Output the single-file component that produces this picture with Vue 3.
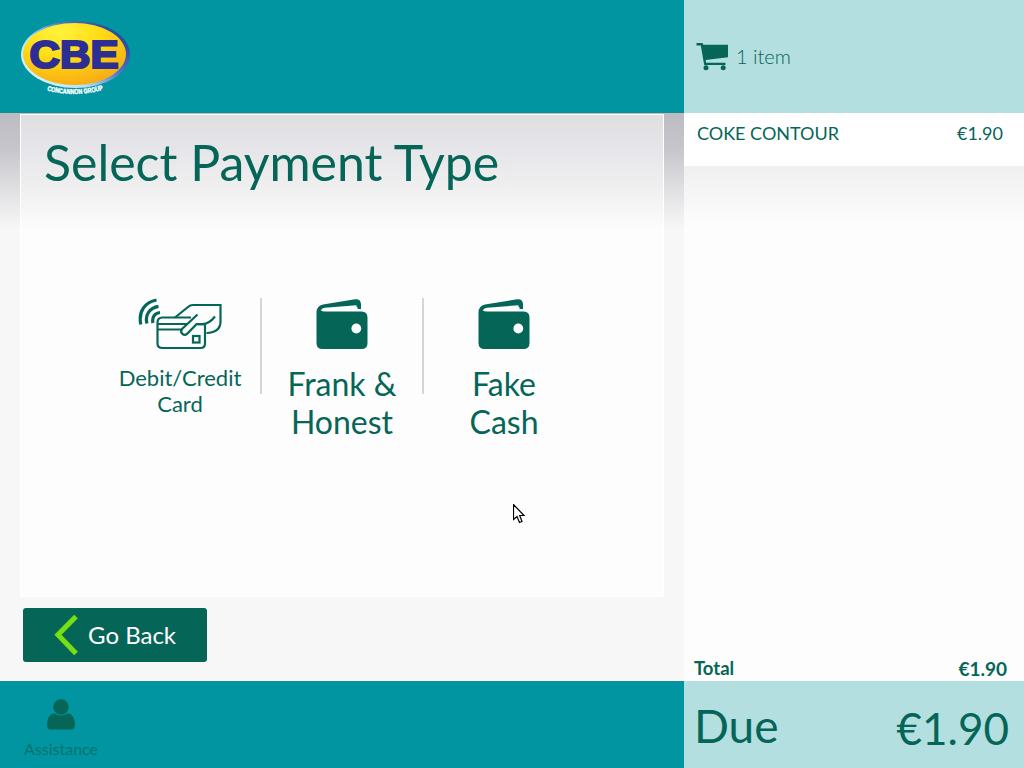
<script setup>
const methods = [
  { id: 'card', icon: 'card', lines: ['Debit/Credit', 'Card'] },
  { id: 'frank', icon: 'wallet', lines: ['Frank &', 'Honest'] },
  { id: 'cash', icon: 'wallet', lines: ['Fake', 'Cash'] },
]
const items = [{ name: 'COKE CONTOUR', price: '€1.90' }]
</script>

<template>
  <div class="screen">
    <div class="left">
      <header class="bar">
        <svg class="logo" width="112" height="80" viewBox="0 0 112 80">
          <defs>
            <linearGradient id="rim" x1="0" y1="1" x2="1" y2="0.3">
              <stop offset="0" stop-color="#e8fbff" />
              <stop offset="0.4" stop-color="#b5e4f2" />
              <stop offset="0.7" stop-color="#5279c6" />
              <stop offset="1" stop-color="#2347a0" />
            </linearGradient>
            <radialGradient id="gold" cx="0.35" cy="0.15" r="0.9">
              <stop offset="0" stop-color="#fff33c" />
              <stop offset="0.45" stop-color="#ffdc14" />
              <stop offset="1" stop-color="#f8a913" />
            </radialGradient>
            <path id="arc" d="M27 70.500Q55 78 84 69.500" />
          </defs>
          <ellipse cx="55.500" cy="34.500" rx="54.500" ry="33.500" fill="url(#rim)" />
          <ellipse cx="54.500" cy="34" rx="51.500" ry="31" fill="url(#gold)" />
          <text class="logo-main" x="9.500" y="48" textLength="89" lengthAdjust="spacingAndGlyphs">CBE</text>
          <text class="logo-sub"><textPath href="#arc" textLength="57" lengthAdjust="spacingAndGlyphs">CONCANNON GROUP</textPath></text>
        </svg>
      </header>
      <main class="content">
        <section class="panel">
          <h1>Select Payment Type</h1>
          <div class="methods">
            <button v-for="m in methods" :key="m.id" class="method" :class="m.icon">
              <svg v-if="m.icon === 'card'" class="icon" width="84" height="52" viewBox="0 0 84 52" fill="none" stroke="#056658" stroke-width="2.200">
                <path d="M2.800 26.500C0 13 7.500 4 18.500 2M9 25.500C6.500 17 12 9.500 20.500 8.300M15 25C13.500 19 17 15 22 14.500" stroke-width="3.200" />
                <path d="M37 19.500L50 9Q52 7 55 7H82.500V23.500Q82.500 34.500 68.500 35" />
                <path d="M53 19.500H24.500Q19.500 19.500 19.500 24.500V45.500Q19.500 50 24.500 50H62.500Q67 50 67 45.500V26" />
                <path d="M20 26H49M20 31.500H44M60 26.200H67" />
                <path d="M59.500 16.500L44 31Q42 34 44.500 36Q47.500 38 50 35L58.500 26.200H64.500Q71 26 77 18.500" />
                <rect x="55" y="38" width="6.500" height="6.500" />
              </svg>
              <svg v-else class="icon" width="52" height="52" viewBox="0 0 52 52">
                <path fill="#056658" d="M.5 14.500Q.5 8 7 6.500L39 1.300Q45 .8 45 6.500V11H41.500V9L4.500 12.300Q6 13.500 9 13.500H45.500Q51.500 13.500 51.500 19.500V45Q51.500 51 45.500 51H6.500Q.5 51 .5 45Z" />
                <path fill="#fdfdfd" d="M5 12Q6 10 9 9.700L40.500 7.300V12.500H8Q5.500 12.500 5 12Z" />
                <circle cx="40.300" cy="30.500" r="4.900" fill="#fdfdfd" />
              </svg>
              <span v-for="line in m.lines" :key="line" class="line">{{ line }}</span>
            </button>
          </div>
        </section>
        <button class="back">
          <svg width="24" height="42" viewBox="0 0 24 42" fill="none" stroke="#76df12" stroke-width="5.200"><path d="M22 2.500L4 20.800L22 39.500" /></svg>
          <span>Go Back</span>
        </button>
      </main>
      <footer class="bar foot">
        <div class="assist">
          <svg width="28" height="31" viewBox="0 0 28 31" fill="#056658">
            <circle cx="14" cy="8" r="7.700" />
            <path d="M7 14.300Q14 19 21 14.300Q28 16 28 26Q28 30.500 24 30.500H4Q0 30.500 0 26Q0 16 7 14.300Z" />
          </svg>
          <span>Assistance</span>
        </div>
      </footer>
    </div>
    <aside class="right">
      <div class="cart">
        <svg width="33" height="28" viewBox="0 0 33 28" fill="#056658">
          <path d="M.5 0H6Q7 0 7.300 1.800H32V14.200L9.700 17L10 19.800H29.500V22H8.200L4.800 2.600H.5Z" />
          <circle cx="10" cy="24.800" r="2.500" /><circle cx="27.200" cy="24.800" r="2.500" />
        </svg>
        <span>1 item</span>
      </div>
      <div v-for="i in items" :key="i.name" class="item"><span>{{ i.name }}</span><span>{{ i.price }}</span></div>
      <div class="space"></div>
      <div class="total"><span>Total</span><span class="sum">€1.90</span></div>
      <div class="due"><span class="label">Due</span><span class="amount">€1.90</span></div>
    </aside>
    <svg class="cursor" width="13" height="20" viewBox="0 0 13 20"><path d="M.5.5V15.500L4 12.500L6.500 18.500L9 17.500L6.700 11.500H11Z" fill="#fff" stroke="#000" stroke-width="1.200" /></svg>
  </div>
</template>

<style>
body { margin: 0; overflow: hidden; }
</style>

<style scoped>
.screen { position: relative; display: flex; width: 1024px; height: 768px; overflow: hidden; font-family: Lato, sans-serif; color: #056658; }
button { font: inherit; color: inherit; border: 0; background: none; padding: 0; }
.left { width: 684px; display: flex; flex-direction: column; }
.bar { height: 113px; box-sizing: border-box; background: #0095a0; border-bottom: 1px solid #178d91; padding: 20px 0 0 20px; }
.logo { display: block; }
.logo-main { font: 900 39px "Liberation Sans", sans-serif; fill: #2d2e94; stroke: #2d2e94; stroke-width: 2.2px; }
.logo-sub { font: bold 7px "Liberation Sans", sans-serif; fill: #fff; stroke: #fff; stroke-width: .4px; }
.content { height: 568px; box-sizing: border-box; padding: 1px 20px 0; background: linear-gradient(#bebcc3 0, #c6c5cb 35px, #dcdcdf 70px, #f7f7f7 115px); }
.panel { box-sizing: border-box; width: 644px; height: 483px; border: 1px solid #fff; border-bottom-color: #fdfdfd; background: linear-gradient(#dfdee1 0, #e6e5e9 35px, #f0f0f0 75px, #fdfdfd 115px); }
h1 { margin: 0; padding: 17px 0 2px 23px; font-weight: 400; font-size: 50px; line-height: 60px; white-space: nowrap; }
.methods { display: flex; padding: 104px 0 0 78px; }
.method { width: 162px; height: 150px; position: relative; display: flex; flex-direction: column; align-items: center; }
.method + .method::before { content: ""; position: absolute; left: -1px; top: 0; width: 2px; height: 96px; background: #d5d5d5; }
.icon { display: block; flex: none; margin-bottom: 15px; }
.line { font-size: 32px; line-height: 38px; white-space: nowrap; }
.card .line { font-size: 22px; line-height: 26px; }
.back { display: flex; align-items: center; width: 184px; height: 54px; margin: 11px 0 0 3px; padding-left: 31px; border-radius: 3px; background: #056658; color: #fff; font-size: 24px; gap: 10px; }
.back span { padding-bottom: 2px; }
.foot { height: 87px; border-bottom: 0; border-top: 1px solid #178d91; padding: 17px 0 0 20px; }
.assist { width: 82px; display: flex; flex-direction: column; align-items: center; font-size: 16px; line-height: 20px; gap: 9px; }
.assist span { opacity: .7; }
.right { flex: 1; display: flex; flex-direction: column; background: #fdfdfd; }
.cart { height: 113px; box-sizing: border-box; background: #b3dfe0; display: flex; align-items: center; gap: 7px; padding-left: 12px; font-size: 20px; font-weight: 300; }
.cart span { padding-bottom: 2px; }
.item { height: 53px; box-sizing: border-box; display: flex; justify-content: space-between; padding: 9px 21px 0 13px; font-size: 18px; line-height: 23px; background: #fff; }
.space { flex: 1; background: linear-gradient(#f0f0f0 0, #f5f5f5 25px, #fdfdfd 60px); }
.total { height: 24px; display: flex; justify-content: space-between; padding: 0 17px 0 10px; font-size: 18.5px; line-height: 23px; font-weight: 700; }
.sum { font-size: 19px; }
.due { height: 87px; display: flex; justify-content: space-between; align-items: flex-start; padding: 0 15px 0 10px; background: #b3dfe0; font-size: 46px; }
.label { line-height: 90px; }
.amount { font-size: 44px; line-height: 94px; }
.cursor { position: absolute; left: 513px; top: 504px; }
</style>
